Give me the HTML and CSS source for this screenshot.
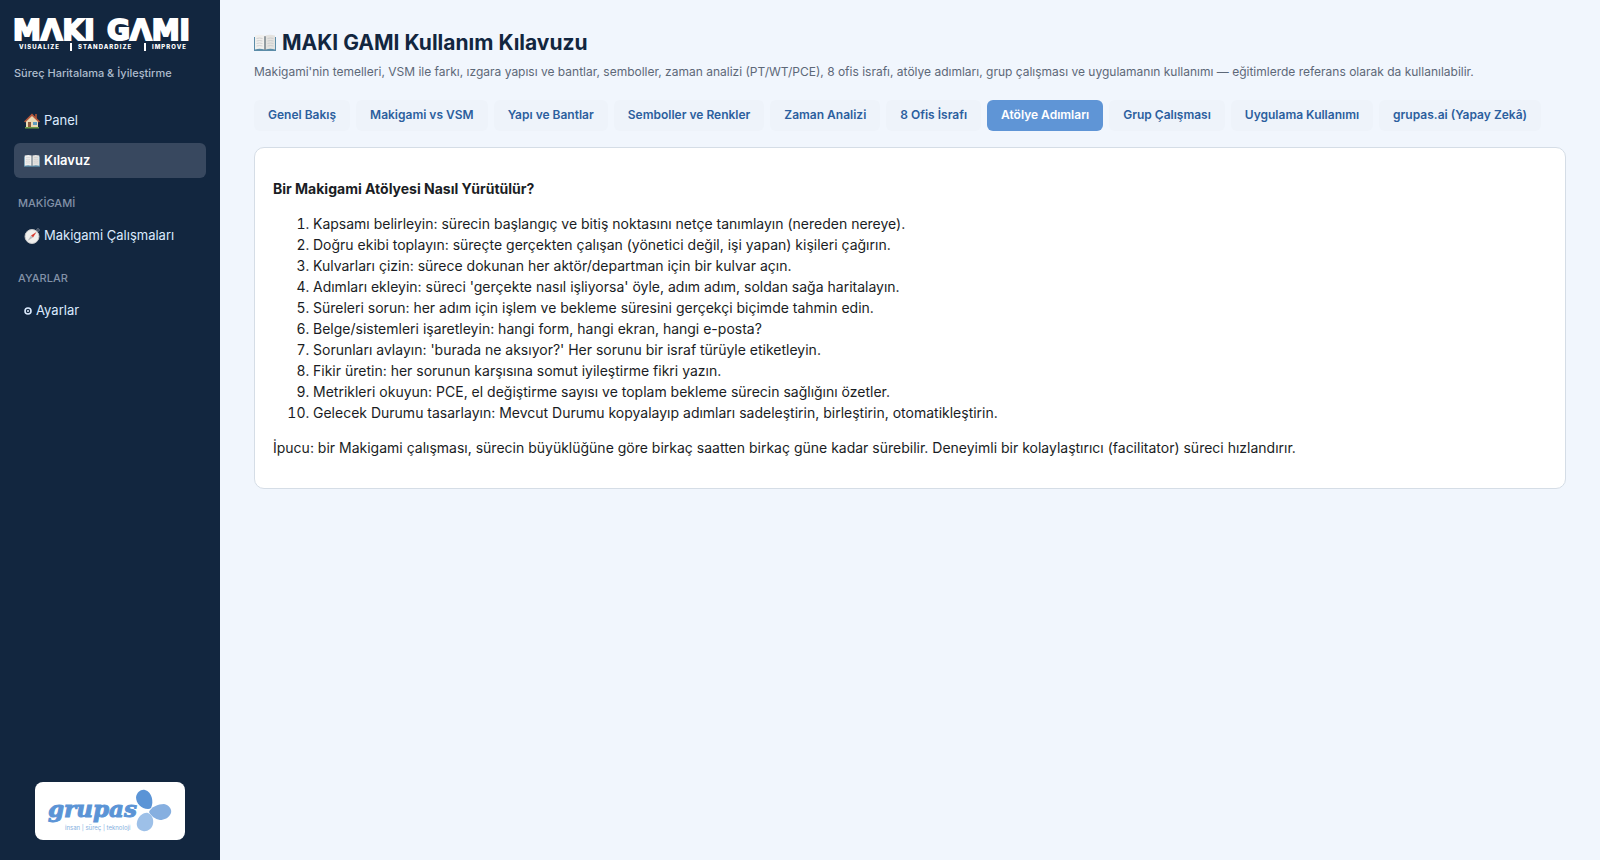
FILE: index.html
```
<!DOCTYPE html>
<html lang="tr">
<head>
    <meta charset="UTF-8">
    <meta name="viewport" content="width=device-width, initial-scale=1.0">
    <title>MAKI GAMI Kullanım Kılavuzu</title>
    <link rel="stylesheet" href="styles.css">
</head>
<body>
    <!-- Shared icons -->
    <svg class="icon-defs" aria-hidden="true">
        <symbol id="icon-book" viewBox="0 0 22 18">
            <path fill="#5b8ca8" d="M0 3h22v14H0z"/>
            <path fill="#f1f0ee" d="M1 1.500q5-1.500 9.500 0v14q-5-1.500-9.500 0z"/>
            <path fill="#e4e3e0" d="M21 1.500q-5-1.500-9.500 0v14q5-1.500 9.500 0z"/>
            <path fill="#8b8d90" d="M10.300 2h1.400v14h-1.400z"/>
            <path fill="none" stroke="#c3c4c6" stroke-width=".7" d="M2.500 4.500q3-1 6 0M2.500 7q3-1 6 0M2.500 9.500q3-1 6 0M2.500 12q3-1 6 0M13.500 4.500q3-1 6 0M13.500 7q3-1 6 0M13.500 9.500q3-1 6 0M13.500 12q3-1 6 0"/>
        </symbol>
    </svg>

    <div class="layout">
        <!-- Sidebar -->
        <aside class="sidebar">
            <svg class="brand-logo" viewBox="0 0 180 32" role="img" aria-label="MAKI GAMI">
                <text class="brand-name" x="-1" y="20">MΛKI</text>
                <text class="brand-name" x="93" y="20">GΛMI</text>
                <text class="brand-tag" x="5" y="29">VISUALIZE</text>
                <text class="brand-tag" x="64" y="29">STANDARDIZE</text>
                <text class="brand-tag" x="138" y="29">IMPROVE</text>
                <path fill="#fff" d="M56 23h2v8h-2zM130 23h2v8h-2z"/>
            </svg>
            <p class="brand-subtitle">Süreç Haritalama &amp; İyileştirme</p>

            <nav class="nav">
                <a class="nav-item" href="#">
                    <svg class="nav-icon" viewBox="0 0 16 16" aria-hidden="true">
                        <path fill="#8e4a34" d="M11 1h2v5h-2z"/>
                        <path fill="#ead9b4" d="M2 8l6-6 6 6v7H2z"/>
                        <path fill="#b5563b" d="M8 .5L0 8.500l1.200 1L8 3l6.800 6.500 1.200-1z"/>
                        <path fill="#8a5a3b" d="M4 9h3v6H4z"/>
                        <path fill="#5f9cc0" d="M9 9h4v3H9z"/>
                        <path fill="#6d9a45" d="M1 14h14v1.500H1z"/>
                    </svg>
                    Panel
                </a>
                <a class="nav-item active" href="#">
                    <svg class="nav-icon" aria-hidden="true"><use href="#icon-book"/></svg>
                    Kılavuz
                </a>
                <h2 class="nav-title">MAKİGAMİ</h2>
                <a class="nav-item" href="#">
                    <svg class="nav-icon" viewBox="0 0 16 16" aria-hidden="true">
                        <circle cx="14" cy="2" r="1.300" fill="none" stroke="#6b7685"/>
                        <circle cx="8" cy="8.500" r="7" fill="#f0efed" stroke="#c4c5c7"/>
                        <path fill="#d8392f" d="M12.500 4L9 9.500 7 7.500z"/>
                        <path fill="#b9bbbe" d="M3.500 13L7 7.500l2 2z"/>
                    </svg>
                    Makigami Çalışmaları
                </a>
                <h2 class="nav-title">AYARLAR</h2>
                <a class="nav-item" href="#">
                    <svg class="nav-icon nav-icon-small" viewBox="0 0 8 8" aria-hidden="true">
                        <circle cx="4" cy="4" r="3" fill="none" stroke="#dbeafe" stroke-width="1.600"/>
                        <circle cx="4" cy="4" r="1" fill="#dbeafe"/>
                    </svg>
                    Ayarlar
                </a>
            </nav>

            <div class="company">
                <svg class="company-logo" viewBox="0 0 126 44" role="img" aria-label="grupas">
                    <text class="company-name" x="1" y="28">grupas</text>
                    <text class="company-tag" x="18" y="41">insan | süreç | teknoloji</text>
                    <path fill="#5b94d6" d="M101 20c-7 0-12-6-12-12 1-5 5-8 9-7 7 2 9 12 6 18q-1 1-3 1z"/>
                    <path fill="#86afe0" d="M102 23c2-5 9-8 15-8 5 1 8 5 7 9-2 5-7 7-11 7-5-1-9-4-11-8z"/>
                    <path fill="#9dc0e8" d="M101 24c4 2 6 6 5 11-1 5-6 8-10 7-5-1-7-5-6-9 1-5 6-10 11-9z"/>
                </svg>
            </div>
        </aside>

        <!-- Guide content -->
        <main class="content">
            <h1 class="page-title">
                <svg class="title-icon" aria-hidden="true"><use href="#icon-book"/></svg>
                MAKI GAMI Kullanım Kılavuzu
            </h1>
            <p class="page-subtitle">Makigami'nin temelleri, VSM ile farkı, ızgara yapısı ve bantlar, semboller, zaman analizi (PT/WT/PCE), 8 ofis israfı, atölye adımları, grup çalışması ve uygulamanın kullanımı — eğitimlerde referans olarak da kullanılabilir.</p>

            <div class="tabs">
                <button class="tab" type="button">Genel Bakış</button>
                <button class="tab" type="button">Makigami vs VSM</button>
                <button class="tab" type="button">Yapı ve Bantlar</button>
                <button class="tab" type="button">Semboller ve Renkler</button>
                <button class="tab" type="button">Zaman Analizi</button>
                <button class="tab" type="button">8 Ofis İsrafı</button>
                <button class="tab active" type="button">Atölye Adımları</button>
                <button class="tab" type="button">Grup Çalışması</button>
                <button class="tab" type="button">Uygulama Kullanımı</button>
                <button class="tab" type="button">grupas.ai (Yapay Zekâ)</button>
            </div>

            <section class="card">
                <p><strong>Bir Makigami Atölyesi Nasıl Yürütülür?</strong></p>
                <ol>
                    <li>Kapsamı belirleyin: sürecin başlangıç ve bitiş noktasını netçe tanımlayın (nereden nereye).</li>
                    <li>Doğru ekibi toplayın: süreçte gerçekten çalışan (yönetici değil, işi yapan) kişileri çağırın.</li>
                    <li>Kulvarları çizin: sürece dokunan her aktör/departman için bir kulvar açın.</li>
                    <li>Adımları ekleyin: süreci 'gerçekte nasıl işliyorsa' öyle, adım adım, soldan sağa haritalayın.</li>
                    <li>Süreleri sorun: her adım için işlem ve bekleme süresini gerçekçi biçimde tahmin edin.</li>
                    <li>Belge/sistemleri işaretleyin: hangi form, hangi ekran, hangi e-posta?</li>
                    <li>Sorunları avlayın: 'burada ne aksıyor?' Her sorunu bir israf türüyle etiketleyin.</li>
                    <li>Fikir üretin: her sorunun karşısına somut iyileştirme fikri yazın.</li>
                    <li>Metrikleri okuyun: PCE, el değiştirme sayısı ve toplam bekleme sürecin sağlığını özetler.</li>
                    <li>Gelecek Durumu tasarlayın: Mevcut Durumu kopyalayıp adımları sadeleştirin, birleştirin, otomatikleştirin.</li>
                </ol>
                <p>İpucu: bir Makigami çalışması, sürecin büyüklüğüne göre birkaç saatten birkaç güne kadar sürebilir. Deneyimli bir kolaylaştırıcı (facilitator) süreci hızlandırır.</p>
            </section>
        </main>
    </div>
</body>
</html>
```
FILE: styles.css
```
* {
    box-sizing: border-box;
}

body {
    margin: 0;
    font-family: Inter, "Liberation Sans", sans-serif;
    font-size: 14px;
    line-height: 21px;
    background-color: #f1f6fd;
    color: #1a1d24;
}

.icon-defs {
    display: none;
}

.layout {
    display: flex;
    min-height: 100vh;
}

/* Sidebar */
.sidebar {
    width: 220px;
    flex-shrink: 0;
    display: flex;
    flex-direction: column;
    padding: 20px 14px;
    background-color: #12263f;
    color: #dbeafe;
}

.brand-logo {
    width: 180px;
    height: 32px;
    overflow: visible;
}

.brand-name {
    font-family: "DejaVu Sans", sans-serif;
    font-size: 28px;
    font-weight: bold;
    fill: #fff;
    stroke: #fff;
    stroke-width: 2px;
}

.brand-tag {
    font-size: 6px;
    font-weight: 800;
    letter-spacing: 1px;
    fill: #fff;
}

.brand-subtitle {
    margin: 12px 0 21px;
    font-size: 11px;
    line-height: 18px;
    font-weight: 500;
    color: #aebccd;
}

.nav {
    display: flex;
    flex-direction: column;
}

.nav-item {
    display: flex;
    align-items: center;
    gap: 4px;
    margin-bottom: 5px;
    padding: 7px 10px;
    border-radius: 6px;
    font-size: 13px;
    font-weight: 400;
    color: #dbeafe;
    text-decoration: none;
}

.nav-item.active {
    background-color: #38485f;
    font-weight: 600;
    color: #fff;
}

.nav-icon {
    width: 16px;
    height: 16px;
}

.nav-icon-small {
    width: 8px;
    height: 8px;
}

.nav-title {
    margin: 11px 4px 6px;
    font-size: 11px;
    line-height: 18px;
    font-weight: 500;
    color: #8292a8;
}

.company {
    width: 150px;
    margin: auto auto 0;
    padding: 7px 12px;
    border-radius: 8px;
    background-color: #fff;
}

.company-logo {
    display: block;
    width: 126px;
    height: 44px;
    overflow: visible;
}

.company-name {
    font-family: "DejaVu Serif", serif;
    font-size: 23px;
    font-weight: bold;
    font-style: italic;
    fill: #5b94d6;
    stroke: #5b94d6;
    stroke-width: 1px;
}

.company-tag {
    font-size: 6px;
    fill: #86afe0;
}

/* Content */
.content {
    flex: 1;
    min-width: 0;
    padding: 29px 34px;
}

.page-title {
    display: flex;
    align-items: center;
    gap: 6px;
    margin: 0 0 4px;
    font-size: 21px;
    line-height: 28px;
    font-weight: 700;
    color: #12263f;
}

.title-icon {
    width: 22px;
    height: 18px;
}

.page-subtitle {
    margin: 0 0 17px;
    font-size: 12px;
    line-height: 22px;
    color: #5d6878;
}

.tabs {
    display: flex;
    flex-wrap: wrap;
    gap: 6px;
    margin-bottom: 16px;
}

.tab {
    padding: 7px 14px 8px;
    border: none;
    border-radius: 6px;
    background-color: #eef3fa;
    font-family: inherit;
    font-size: 12px;
    line-height: 16px;
    font-weight: 600;
    color: #2c5f9e;
    cursor: pointer;
}

.tab.active {
    background-color: #5f95d6;
    color: #fff;
}

.card {
    padding: 16px 18px;
    border: 1px solid #d5dde6;
    border-radius: 10px;
    background-color: #fff;
}

.card p,
.card ol {
    margin: 14px 0;
}

.card ol {
    padding-left: 40px;
}
```
